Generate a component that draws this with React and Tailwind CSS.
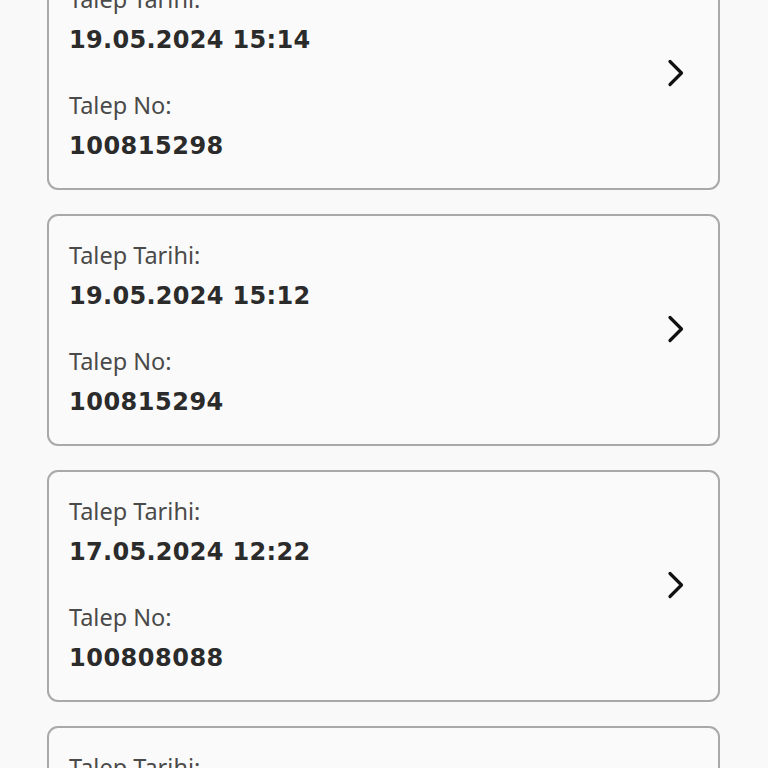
import React from 'react';

const requests = [
  { date: '19.05.2024 15:14', no: '100815298' },
  { date: '19.05.2024 15:12', no: '100815294' },
  { date: '17.05.2024 12:22', no: '100808088' },
  { date: '17.05.2024 12:20', no: '100808084' },
];

function Chevron() {
  return (
    <svg width="20" height="30" viewBox="0 0 20 30" fill="none">
      <path d="M4 3.5 L15.5 15 L4 26.5" stroke="#111" strokeWidth="3.2" strokeLinecap="round" strokeLinejoin="round" />
    </svg>
  );
}

function RequestCard({ item }) {
  return (
    <div className="flex items-center justify-between rounded-[11px] border-2 border-[#a9a9a9] bg-[#fafafa] pl-[20px] pr-[32px] pt-[24px] pb-[26px]">
      <div className="flex flex-col">
        <span className="h-[32px] text-[23.5px] leading-[31px] text-[#4a4a4a] font-['Noto_Sans',sans-serif]">Talep Tarihi:</span>
        <span className="mt-[8px] h-[32px] text-[24px] leading-[32px] font-bold tracking-[0.3px] text-[#2b2b2b] font-['DejaVu_Sans',sans-serif]">{item.date}</span>
        <span className="mt-[34px] h-[32px] text-[23.5px] leading-[31px] text-[#4a4a4a] font-['Noto_Sans',sans-serif]">Talep No:</span>
        <span className="mt-[8px] h-[32px] text-[24px] leading-[32px] font-bold tracking-[0.5px] text-[#2b2b2b] font-['DejaVu_Sans',sans-serif]">{item.no}</span>
      </div>
      <Chevron />
    </div>
  );
}

export default function App() {
  return (
    <div className="h-[768px] w-[768px] overflow-hidden bg-[#f9f9f9]">
      <div className="-mt-[42px] flex flex-col gap-[24px] pl-[47px] pr-[48px]">
        {requests.map((r) => (
          <RequestCard key={r.no} item={r} />
        ))}
      </div>
    </div>
  );
}
